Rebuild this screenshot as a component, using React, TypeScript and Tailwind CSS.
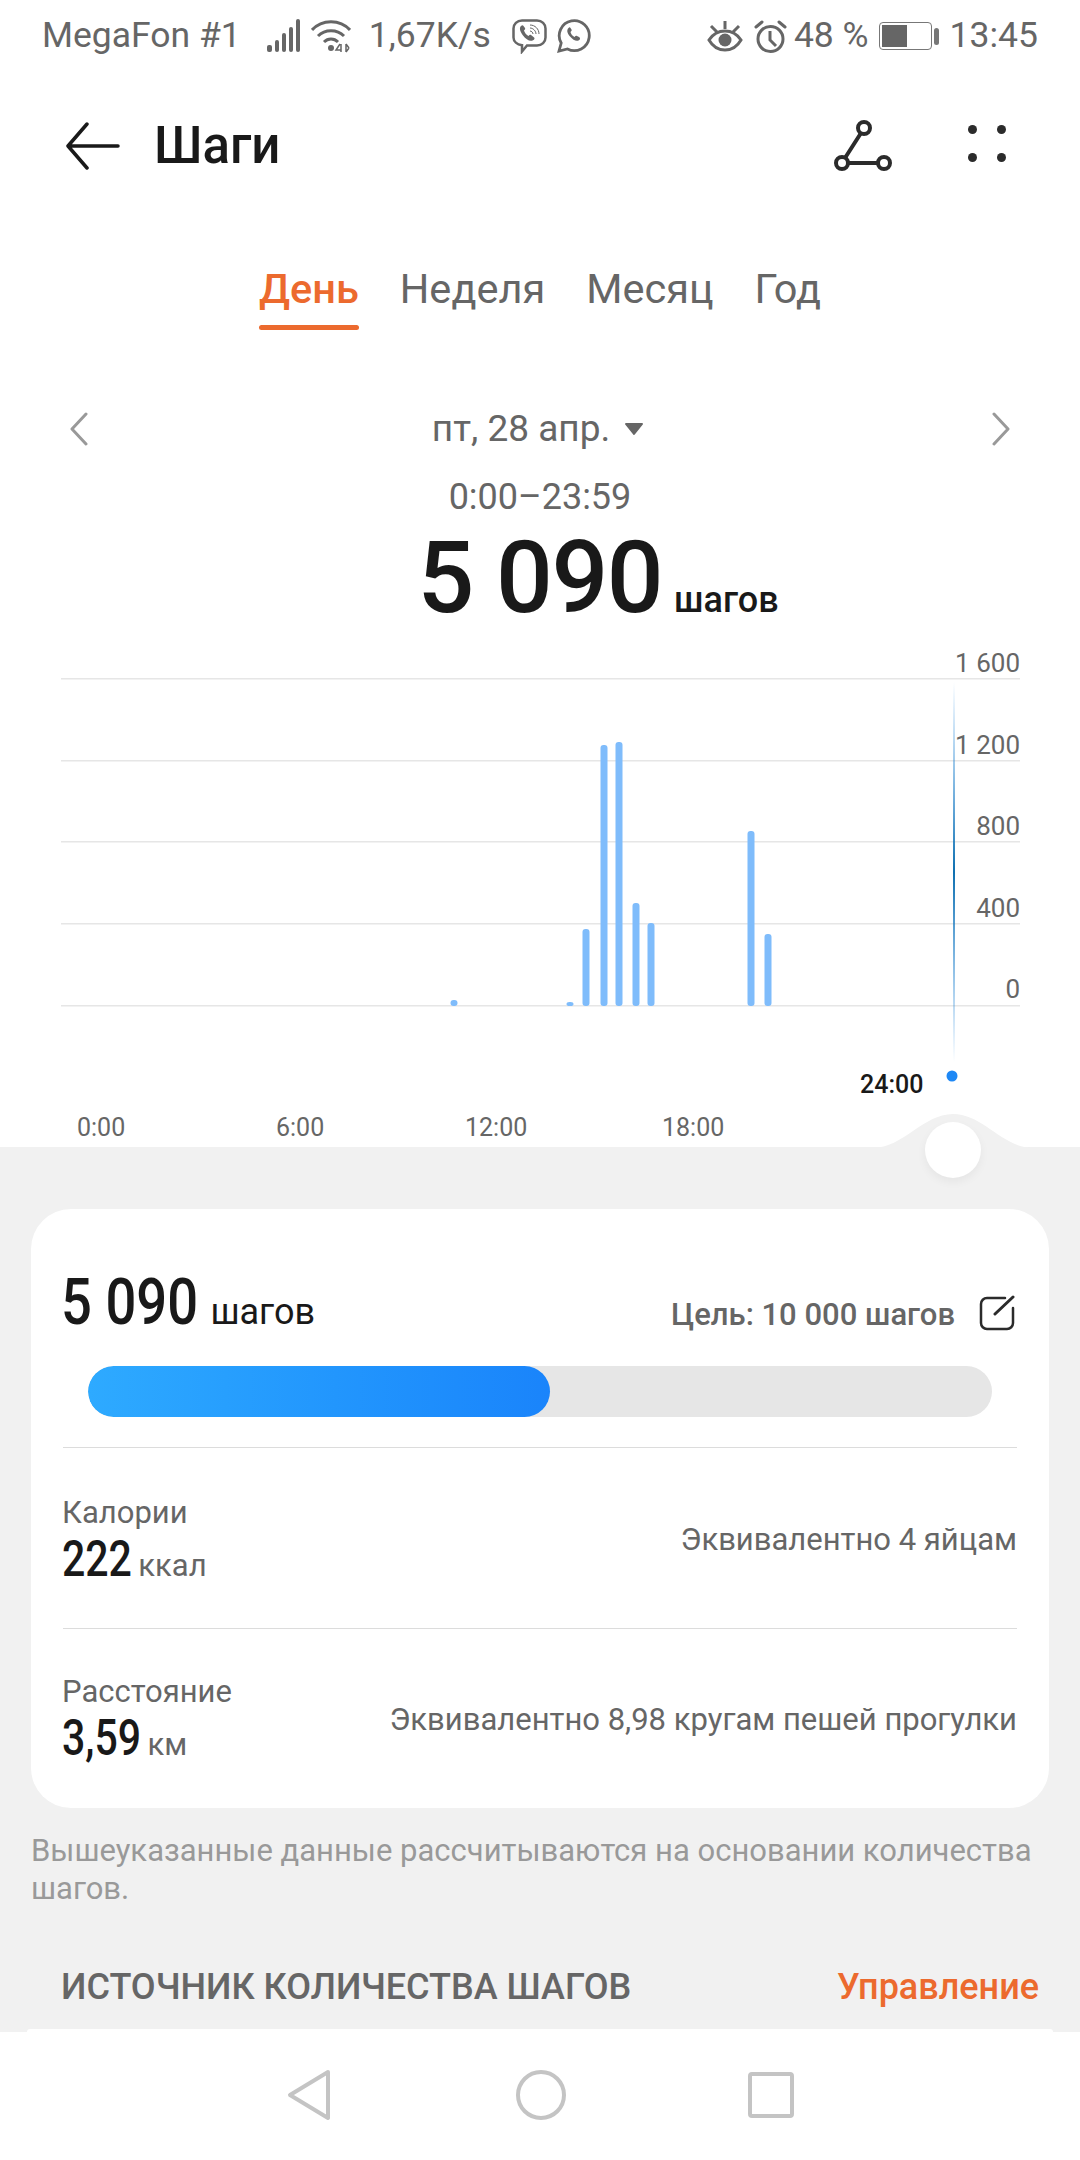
const bars = [
  { x: 454, top: 1000 },
  { x: 570, top: 1002 },
  { x: 586, top: 929 },
  { x: 604, top: 745 },
  { x: 619, top: 742 },
  { x: 636, top: 903 },
  { x: 651, top: 923 },
  { x: 751, top: 831 },
  { x: 768, top: 934 },
];

const yLabels = ["1 600", "1 200", "800", "400", "0"];

function SignalIcon() {
  return (
    <svg width="36" height="34" viewBox="0 0 36 34" className="ml-[25px]" fill="#666">
      <rect x="1" y="26" width="5" height="7" rx="2" />
      <rect x="9" y="21" width="4" height="12" rx="2" />
      <rect x="16" y="14" width="4" height="19" rx="2" />
      <rect x="23" y="8" width="4" height="25" rx="2" />
      <rect x="30" y="0" width="4" height="33" rx="2" />
    </svg>
  );
}

function WifiIcon() {
  return (
    <svg width="40" height="34" viewBox="0 0 40 34" className="ml-[9px]" fill="none" stroke="#666" strokeWidth="3">
      <path d="M1 11C11 0 29 0 39 11" />
      <path d="M7 17c7-7 19-7 26 0" />
      <path d="M13 23c4-4 10-4 14 0" />
      <circle cx="20" cy="29" r="3" fill="#666" stroke="none" />
      <path d="M29 25l-4 6h5M30 25v8" strokeWidth="1.500" />
      <path d="M35 25v8M35 25l3 4M35 33l3-4" strokeWidth="1.500" />
    </svg>
  );
}

function ViberIcon() {
  return (
    <svg width="35" height="35" viewBox="0 0 35 35" fill="none" stroke="#666" strokeWidth="2.500">
      <path d="M10 1.500h15c5 0 8.500 3.500 8.500 8v9c0 4.500-3.500 8-8.500 8h-10l-5 6v-6.300c-5-.7-8.500-3.700-8.500-7.700v-9c0-4.500 3.500-8 8.500-8z" />
      <path d="M9 7c-2 2-1 5.500 2 9.500s6.500 6 9.500 5c2.500-1 2.500-2.500 1-3.500l-2.500-2c-1-.5-1.500 0-2.500 1-2-1-4-3.500-4.500-5.500 1-1 1.500-1.500 1-2.500L11.500 7C11 6 10 6 9 7z" fill="#666" stroke="none" />
      <path d="M18 6c5 0 9 4 9 9M18 9c3 0 6 3 6 6M18 12c1.500 0 3 1.500 3 3" strokeWidth="1" />
    </svg>
  );
}

function WhatsappIcon() {
  return (
    <svg width="34" height="34" viewBox="0 0 34 34" fill="none" stroke="#666" strokeWidth="2.800">
      <path d="M2 32l2.200-8A15 15 0 1 1 10.500 30L2 32z" />
      <path d="M11.500 9c-2 2-1.500 5 1.500 8.500s6 5 8.500 4c2-1 2-2.500.5-3.500l-2-1c-1-.5-1.500 0-2.500 1-2-1-3.500-3-4-5 1-1 1.500-1.500 1-2.500L13.500 9c-.5-1-1.200-.8-2 0z" fill="#666" stroke="none" />
    </svg>
  );
}

function EyeIcon() {
  return (
    <svg width="36" height="32" viewBox="0 0 36 32" fill="none" stroke="#666" strokeWidth="3">
      <path d="M2 20c4-6 9-9 16-9s12 3 16 9c-4 7-9 10-16 10S6 27 2 20z" />
      <circle cx="18" cy="20" r="6.500" fill="#666" stroke="none" />
      <path d="M18 1v8M4 6l6 6M32 6l-6 6" />
    </svg>
  );
}

function AlarmIcon() {
  return (
    <svg width="33" height="33" viewBox="0 0 33 33" fill="none" stroke="#666" strokeWidth="3">
      <circle cx="16.500" cy="19" r="12.500" />
      <path d="M16 11v9l6 6" />
      <path d="M2 7l6-5M31 7l-6-5" strokeLinecap="round" />
    </svg>
  );
}

function BatteryIcon() {
  return (
    <div className="ml-[10px] flex items-center gap-[2px]">
      <div className="w-[53px] h-[28px] rounded-[4px] border-[1.5px] border-[#777] p-[2px] flex">
        <div className="w-[25px] bg-[#666]" />
      </div>
      <div className="w-[5px] h-[17px] rounded-sm bg-[#777]" />
    </div>
  );
}

function StatusBar() {
  return (
    <div className="h-[72px] flex items-center pl-[42px] pr-[42px] text-[35.5px] text-[#666] shrink-0">
      <span>MegaFon #1</span>
      <SignalIcon />
      <WifiIcon />
      <span className="ml-[18px]">1,67K/s</span>
      <div className="ml-[21px] flex gap-[10px]">
        <ViberIcon />
        <WhatsappIcon />
      </div>
      <div className="ml-auto flex items-center">
        <EyeIcon />
        <div className="ml-[11px]">
          <AlarmIcon />
        </div>
        <span className="ml-[7px]">48 %</span>
        <BatteryIcon />
        <span className="ml-[11px]">13:45</span>
      </div>
    </div>
  );
}

function Header() {
  return (
    <div className="h-[80px] mt-[34px] flex items-center pl-[66px] pr-[74px] shrink-0">
      <svg width="54" height="48" viewBox="0 0 54 48" fill="none" stroke="#191919" strokeWidth="3.500" strokeLinecap="round" strokeLinejoin="round">
        <path d="M52 24H3M21 2L2 24l19 22" />
      </svg>
      <span className="ml-[34px] text-[51px] font-medium text-[#191919]">Шаги</span>
      <svg width="58" height="52" viewBox="0 0 58 52" fill="none" stroke="#2b2b2b" strokeWidth="4" className="ml-auto">
        <circle cx="30" cy="8" r="6" />
        <circle cx="8" cy="43" r="6" />
        <circle cx="50" cy="43" r="6" />
        <path d="M27 13L11 38M14 43h30" />
      </svg>
      <div className="ml-[76px] -mt-[6px] grid grid-cols-2 gap-x-[20px] gap-y-[19px]">
        <div className="w-[9px] h-[9px] rounded-full bg-[#2b2b2b]" />
        <div className="w-[9px] h-[9px] rounded-full bg-[#2b2b2b]" />
        <div className="w-[9px] h-[9px] rounded-full bg-[#2b2b2b]" />
        <div className="w-[9px] h-[9px] rounded-full bg-[#2b2b2b]" />
      </div>
    </div>
  );
}

function Tabs() {
  return (
    <div className="mt-[75px] h-[84px] flex justify-center gap-[41px] text-[41.5px] text-[#666] shrink-0">
      <div className="flex flex-col items-center">
        <span className="leading-[56px] font-medium text-[#ec6a2e]">День</span>
        <div className="mt-[8px] h-[5px] w-full rounded-full bg-[#ec6a2e]" />
      </div>
      <span className="leading-[56px]">Неделя</span>
      <span className="leading-[56px]">Месяц</span>
      <span className="leading-[56px]">Год</span>
    </div>
  );
}

function DateBlock() {
  return (
    <div className="mt-[57px] flex flex-col items-center shrink-0">
      <div className="w-full px-[70px] h-[54px] flex items-center justify-between">
        <svg width="18" height="34" viewBox="0 0 18 34" fill="none" stroke="#999" strokeWidth="3" strokeLinecap="round" strokeLinejoin="round">
          <path d="M16 2L2 17l14 15" />
        </svg>
        <div className="flex items-center gap-[14px] pr-[4px] text-[37px] text-[#666]">
          <span>пт, 28 апр.</span>
          <svg width="20" height="14" viewBox="0 0 20 14" fill="#666" stroke="#666" strokeWidth="2" strokeLinejoin="round">
            <path d="M2 2h16l-8 10z" />
          </svg>
        </div>
        <svg width="18" height="34" viewBox="0 0 18 34" fill="none" stroke="#999" strokeWidth="3" strokeLinecap="round" strokeLinejoin="round">
          <path d="M2 2l14 15L2 32" />
        </svg>
      </div>
      <div className="mt-[19px] text-[36px] leading-[44px] text-[#666]">0:00–23:59</div>
      <div className="h-[111px] pl-[116px] pt-[4px] flex items-baseline leading-[110px] text-[#191919] font-medium">
        <span className="text-[100px] tracking-[-1.500px]">5 090</span>
        <span className="ml-[12px] text-[36px]">шагов</span>
      </div>
    </div>
  );
}

function Chart() {
  return (
    <div className="relative h-[517px] shrink-0">
      <svg width="1080" height="517" viewBox="0 630 1080 517" className="absolute inset-0">
        <defs>
          <linearGradient id="cursor" x1="0" y1="0" x2="0" y2="1">
            <stop offset="0" stopColor="#1e88e5" stopOpacity="0" />
            <stop offset="0.5" stopColor="#0f70b0" stopOpacity="1" />
            <stop offset="1" stopColor="#1e88e5" stopOpacity="0" />
          </linearGradient>
        </defs>
        {[678, 760, 841, 923, 1005].map((y) => (
          <rect key={y} x="61" y={y} width="959" height="1.500" fill="#e6e6e6" />
        ))}
        {bars.map((b) => (
          <rect key={b.x} x={b.x - 3.500} y={b.top} width="7" height={1005 - b.top + 1} rx="3" fill="#7fbcfb" />
        ))}
        <rect x="953" y="682" width="2" height="380" fill="url(#cursor)" />
        <circle cx="952" cy="1076" r="5.500" fill="#1e88f5" />
      </svg>
      <div className="absolute right-[60px] top-[15px] flex flex-col items-end gap-[44.500px] text-[26px] leading-[37px] text-[#666]">
        {yLabels.map((l) => (
          <span key={l}>{l}</span>
        ))}
      </div>
      <span className="absolute left-[860px] top-[440px] text-[25px] leading-[30px] font-medium text-[#191919]">24:00</span>
      <div className="absolute left-[77px] top-[483px] flex text-[25px] leading-[30px] text-[#666]">
        <span className="w-[199px]">0:00</span>
        <span className="w-[189px]">6:00</span>
        <span className="w-[197px]">12:00</span>
        <span>18:00</span>
      </div>
    </div>
  );
}

function SummaryCard() {
  return (
    <div className="mx-[31px] h-[599px] rounded-[40px] bg-white px-[32px] flex flex-col">
      <div className="h-[157px] flex flex-col">
        <div className="mt-[58px] flex items-center justify-between h-[72px]">
          <div className="flex items-baseline text-[#191919] -ml-[2px]">
            <span className="text-[64px] font-medium inline-block origin-left scale-x-[0.85] -mr-[25px]">5 090</span>
            <span className="ml-[13px] text-[36px]">шагов</span>
          </div>
          <div className="flex items-center gap-[24px] mt-[25px] mr-[2px]">
            <span className="text-[31px] font-medium text-[#666]">Цель: 10 000 шагов</span>
            <svg width="36" height="36" viewBox="0 0 36 36" fill="none" stroke="#2b2b2b" strokeWidth="2.500" strokeLinecap="round" className="-mt-[6px]">
              <path d="M26 3H8a6 6 0 0 0-6 6v19a6 6 0 0 0 6 6h20a6 6 0 0 0 6-6V13" />
              <path d="M16 19L34 2" strokeWidth="3" />
            </svg>
          </div>
        </div>
      </div>
      <div className="mx-[25px] h-[51px] rounded-full bg-[#e6e6e6] overflow-hidden">
        <div className="h-full w-[462px] rounded-full bg-gradient-to-r from-[#2eaaff] to-[#1a84fb]" />
      </div>
      <div className="mt-[30px] border-t-[1.5px] border-[#dcdcdc] h-[181px] flex items-center justify-between">
        <div className="flex flex-col mt-[8px] -ml-[1px]">
          <span className="text-[31px] leading-[40px] text-[#666]">Калории</span>
          <div className="flex items-baseline text-[#191919] leading-[52px]">
            <span className="text-[50px] font-medium inline-block origin-left scale-x-[0.82] -mr-[15px]">222</span>
            <span className="ml-[6px] text-[31px] text-[#666]">ккал</span>
          </div>
        </div>
        <span className="mt-[4px] text-[31px] text-[#666]">Эквивалентно 4 яйцам</span>
      </div>
      <div className="border-t-[1.5px] border-[#dcdcdc] flex-1 flex items-center justify-between pb-[2px]">
        <div className="flex flex-col mt-[8px] -ml-[1px]">
          <span className="text-[31px] leading-[40px] text-[#666]">Расстояние</span>
          <div className="flex items-baseline text-[#191919] leading-[52px]">
            <span className="text-[50px] font-medium inline-block origin-left scale-x-[0.82] -mr-[17px]">3,59</span>
            <span className="ml-[6px] text-[31px] text-[#666]">км</span>
          </div>
        </div>
        <span className="mt-[5px] text-[31px] text-[#666]">Эквивалентно 8,98 кругам пешей прогулки</span>
      </div>
    </div>
  );
}

function GraySection() {
  return (
    <div className="relative flex-1 bg-[#f1f1f1] pt-[62px] flex flex-col">
      <svg width="160" height="34" viewBox="0 0 160 34" className="absolute left-[873px] -top-[33px]" fill="#f1f1f1">
        <path d="M0 34c30 0 50-34 80-34s50 34 80 34z" />
      </svg>
      <div className="absolute left-[925px] -top-[25px] w-[56px] h-[56px] rounded-full bg-white shadow-[0_4px_10px_rgba(0,0,0,0.05)]" />
      <SummaryCard />
      <p className="mt-[24px] px-[31px] text-[31px] leading-[38px] text-[#999]">
        Вышеуказанные данные рассчитываются на основании количества шагов.
      </p>
      <div className="mt-[57px] pl-[61px] pr-[41px] flex items-center justify-between text-[36px] leading-[44px] font-medium">
        <span className="text-[#666]">ИСТОЧНИК КОЛИЧЕСТВА ШАГОВ</span>
        <span className="text-[#ec6a2e]">Управление</span>
      </div>
      <div className="mt-auto mx-[27px] h-[3px] rounded-t-[20px] bg-white" />
    </div>
  );
}

function NavBar() {
  return (
    <div className="h-[128px] bg-white flex items-center justify-center pb-[3px] shrink-0">
      <svg width="44" height="52" viewBox="0 0 44 52" fill="none" stroke="#c4c4c4" strokeWidth="4" strokeLinejoin="round">
        <path d="M41 3L3 26l38 23z" />
      </svg>
      <svg width="50" height="50" viewBox="0 0 50 50" fill="none" stroke="#c4c4c4" strokeWidth="4" className="ml-[185px]">
        <circle cx="25" cy="25" r="23" />
      </svg>
      <svg width="46" height="46" viewBox="0 0 46 46" fill="none" stroke="#c4c4c4" strokeWidth="4" className="ml-[182px]">
        <rect x="2" y="2" width="42" height="42" rx="2" />
      </svg>
    </div>
  );
}

export default function App() {
  return (
    <div className="w-[1080px] h-[2160px] bg-white flex flex-col overflow-hidden font-['Roboto',sans-serif]">
      <StatusBar />
      <Header />
      <Tabs />
      <DateBlock />
      <Chart />
      <GraySection />
      <NavBar />
    </div>
  );
}
